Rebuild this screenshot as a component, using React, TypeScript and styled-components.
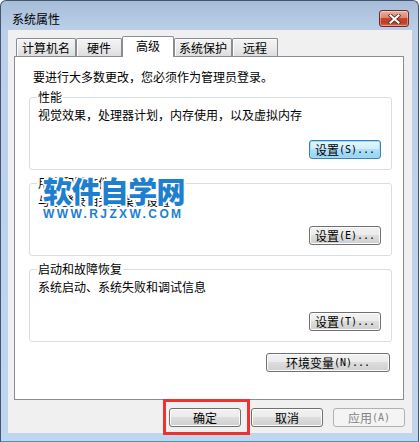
import React from "react";
import styled, { createGlobalStyle, css } from "styled-components";

const GlobalStyle = createGlobalStyle`
  html, body { margin: 0; padding: 0; background: #ffffff; }
  body {
    font-family: "Noto Sans CJK SC", "Noto Sans", sans-serif;
    font-size: 12px;
    color: #000;
  }
  * { box-sizing: border-box; }
`;

const Window = styled.div`
  width: 419px;
  height: 442px;
  display: flex;
  flex-direction: column;
  border: 1px solid #42566f;
  border-bottom-color: #2aa3c4;
  border-radius: 6px 6px 0 0;
  background: linear-gradient(to bottom, #a7bdd8 0px, #bbd0e8 30px, #bfd6ee 100%);
`;

const TitleBar = styled.div`
  height: 29px;
  flex: none;
  display: flex;
  align-items: flex-start;
  padding: 0 9px 0 11px;
`;

const Caption = styled.div`
  flex: 1;
  margin-top: 11px;
  line-height: 14px;
  color: #000;
`;

const CloseButton = styled.div`
  margin-top: 9px;
  width: 30px;
  height: 17px;
  border: 1px solid #6e2b22;
  border-radius: 3px;
  display: flex;
  align-items: center;
  justify-content: center;
  background: linear-gradient(
    to bottom,
    #eab0a2 0%,
    #dd8570 45%,
    #c8442b 50%,
    #bf3e26 80%,
    #d96f53 100%
  );
  box-shadow: inset 0 0 0 1px rgba(255, 255, 255, 0.35);
`;

const Client = styled.div`
  flex: 1;
  margin: 0 6px 8px 7px;
  background: #f0f0f0;
  padding: 6px 8px 0 6px;
  display: flex;
  flex-direction: column;
`;

const TabStrip = styled.div`
  height: 20px;
  flex: none;
  display: flex;
  align-items: flex-end;
  padding-left: 2px;
`;

const Tab = styled.div<{ $w: number; $active?: boolean }>`
  width: ${(p) => p.$w}px;
  height: 18px;
  border: 1px solid #898c95;
  border-bottom: none;
  border-radius: 2px 2px 0 0;
  padding-top: 2px;
  line-height: 14px;
  text-align: center;
  white-space: nowrap;
  background: linear-gradient(to bottom, #f4f4f4 0%, #ebebeb 50%, #dddddd 100%);
  box-shadow: inset 1px 1px 0 #fcfcfc;
  ${(p) =>
    p.$active &&
    css`
      height: 21px;
      margin-bottom: -1px;
      position: relative;
      z-index: 1;
      background: #ffffff;
      box-shadow: none;
    `}
`;

const Panel = styled.div`
  position: relative;
  height: 344px;
  flex: none;
  border: 1px solid #898c95;
  background: #ffffff;
  padding: 13px 11px 0 14px;
  display: flex;
  flex-direction: column;
`;

const Intro = styled.div`
  line-height: 14px;
  margin-left: 4px;
  white-space: nowrap;
`;

const GroupBox = styled.section`
  height: 73px;
  margin-top: 13px;
  border: 1px solid #d5dfe5;
  border-radius: 3px;
  padding: 0 10px 10px 8px;
  display: flex;
  flex-direction: column;
`;

const GroupTitle = styled.div`
  align-self: flex-start;
  margin-top: -8px;
  margin-left: -1px;
  padding: 0 1px;
  background: #ffffff;
  line-height: 14px;
  white-space: nowrap;
`;

const GroupText = styled.div`
  margin-top: 4px;
  line-height: 14px;
  white-space: nowrap;
`;

type Variant = "normal" | "focused" | "disabled";

const Button = styled.button<{ $w: number; $variant?: Variant }>`
  width: ${(p) => p.$w}px;
  height: 19px;
  flex: none;
  padding: 0;
  margin: 0;
  border: 1px solid #707070;
  border-radius: 3px;
  font-family: "Noto Sans CJK SC", "Noto Sans", sans-serif;
  font-size: 12px;
  line-height: 14px;
  color: #000;
  display: flex;
  align-items: center;
  justify-content: center;
  white-space: nowrap;
  background: linear-gradient(to bottom, #f2f2f2 0%, #ebebeb 49%, #dddddd 50%, #cfcfcf 100%);
  box-shadow: inset 0 0 0 1px #fcfcfc;
  ${(p) =>
    p.$variant === "focused" &&
    css`
      border-color: #3c7fb1;
      background: linear-gradient(to bottom, #e5f5fd 0%, #cdeefc 49%, #afe0f9 50%, #94d2f2 100%);
      box-shadow: inset 0 0 0 1px #9fdcf7;
    `}
  ${(p) =>
    p.$variant === "disabled" &&
    css`
      border-color: #adb2b5;
      background: #f4f4f4;
      color: #838383;
      box-shadow: none;
    `}
`;

const GroupButton = styled(Button)`
  margin-top: auto;
  align-self: flex-end;
`;

const EnvButton = styled(Button)`
  margin-top: 11px;
  margin-right: 2px;
  align-self: flex-end;
`;

const Mnemonic = styled.span`
  font-family: "DejaVu Sans Mono", "Liberation Mono", monospace;
  font-size: 10px;
`;

const ButtonRow = styled.div`
  display: flex;
  justify-content: flex-end;
  gap: 10px;
  margin-top: 8px;
  margin-right: -1px;
`;

const Highlight = styled.div`
  position: relative;
  display: flex;
  &::after {
    content: "";
    position: absolute;
    left: -6px;
    top: -9px;
    right: -9px;
    bottom: -8px;
    border: 3px solid #ee3131;
    pointer-events: none;
  }
`;

const Watermark = styled.div`
  position: absolute;
  left: 28px;
  top: 119px;
  z-index: 2;
  color: #1e7fd0;
  text-shadow: 1px 1px 0 #fff, -1px -1px 0 #fff, 1px -1px 0 #fff, -1px 1px 0 #fff,
    2px 0 0 #fff, -2px 0 0 #fff, 0 2px 0 #fff, 0 -2px 0 #fff;
  pointer-events: none;
`;

const WaterTitle = styled.div`
  font-size: 29px;
  line-height: 29px;
  font-weight: 900;
  letter-spacing: -0.6px;
  white-space: nowrap;
`;

const WaterUrl = styled.div`
  margin-top: 3px;
  font-family: "Liberation Sans", Arial, sans-serif;
  font-weight: bold;
  font-size: 12px;
  line-height: 12px;
  letter-spacing: 2.4px;
  white-space: nowrap;
`;

const CloseIcon = () => (
  <svg width="13" height="10" viewBox="0 0 13 10">
    <path d="M2.5 1.5 L10.5 8.5 M10.5 1.5 L2.5 8.5" stroke="#5a3330" strokeWidth="3.8" strokeLinecap="square" fill="none" />
    <path d="M2.5 1.5 L10.5 8.5 M10.5 1.5 L2.5 8.5" stroke="#ffffff" strokeWidth="2" strokeLinecap="square" fill="none" />
  </svg>
);

const tabs = [
  { label: "计算机名", w: 60 },
  { label: "硬件", w: 46 },
  { label: "高级", w: 52, active: true },
  { label: "系统保护", w: 58 },
  { label: "远程", w: 46 },
];

const groups = [
  { title: "性能", text: "视觉效果，处理器计划，内存使用，以及虚拟内存", key: "S", focused: true },
  { title: "用户配置文件", text: "与您登录相关的桌面设置", key: "E" },
  { title: "启动和故障恢复", text: "系统启动、系统失败和调试信息", key: "T" },
];

export default function App() {
  return (
    <>
      <GlobalStyle />
      <Window>
        <TitleBar>
          <Caption>系统属性</Caption>
          <CloseButton>
            <CloseIcon />
          </CloseButton>
        </TitleBar>
        <Client>
          <TabStrip>
            {tabs.map((t) => (
              <Tab key={t.label} $w={t.w} $active={t.active}>
                {t.label}
              </Tab>
            ))}
          </TabStrip>
          <Panel>
            <Intro>要进行大多数更改，您必须作为管理员登录。</Intro>
            {groups.map((g) => (
              <GroupBox key={g.title}>
                <GroupTitle>{g.title}</GroupTitle>
                <GroupText>{g.text}</GroupText>
                <GroupButton $w={72} $variant={g.focused ? "focused" : "normal"}>
                  设置<Mnemonic>({g.key})...</Mnemonic>
                </GroupButton>
              </GroupBox>
            ))}
            <EnvButton $w={124}>
              环境变量<Mnemonic>(N)...</Mnemonic>
            </EnvButton>
            <Watermark>
              <WaterTitle>软件自学网</WaterTitle>
              <WaterUrl>WWW.RJZXW.COM</WaterUrl>
            </Watermark>
          </Panel>
          <ButtonRow>
            <Highlight>
              <Button $w={72}>确定</Button>
            </Highlight>
            <Button $w={72}>取消</Button>
            <Button $w={72} $variant="disabled">
              应用<Mnemonic>(A)</Mnemonic>
            </Button>
          </ButtonRow>
        </Client>
      </Window>
    </>
  );
}
